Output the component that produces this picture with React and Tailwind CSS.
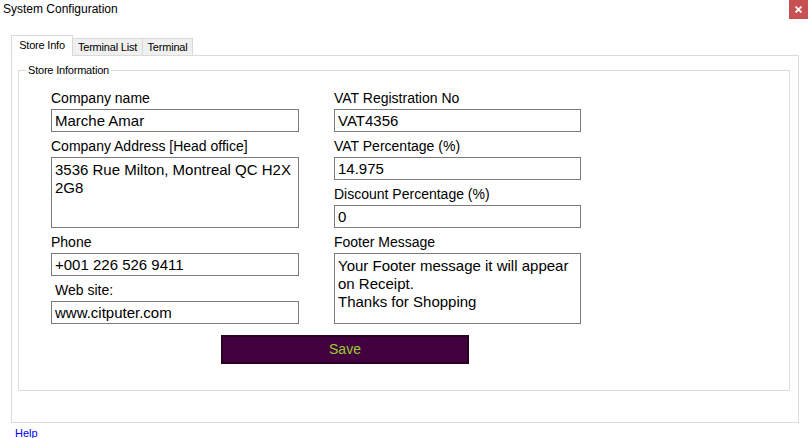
import React from "react";

const Field = ({ label, value, multiline = false, height = "h-[23px]", indent = false }) => (
  <div className="flex flex-col">
    <label className={`mt-[6px] h-[16px] text-[14px] leading-[16px] text-black ${indent ? "pl-[4px]" : ""}`}>
      {label}
    </label>
    {multiline ? (
      <textarea
        readOnly
        defaultValue={value}
        className={`mt-[3px] w-full ${height} resize-none overflow-hidden border border-[#7a7a7a] bg-white px-[3px] pt-[3px] text-[15px] leading-[18px] text-black outline-none`}
      />
    ) : (
      <input
        readOnly
        defaultValue={value}
        className={`mt-[3px] w-full ${height} border border-[#7a7a7a] bg-white px-[3px] text-[15px] leading-[21px] text-black outline-none`}
      />
    )}
  </div>
);

const App = () => {
  return (
    <div className="w-[808px] h-[438px] overflow-hidden bg-white font-['Liberation_Sans',Arial,sans-serif] text-black">
      {/* title bar */}
      <div className="flex h-[19px] items-center justify-between">
        <span className="pl-[3px] text-[12px] leading-[19px]">System Configuration</span>
        <button className="flex h-[19px] w-[19px] items-center justify-center bg-[#c75050]">
          <svg width="7" height="7" viewBox="0 0 7 7">
            <path d="M0.5 0.5 L6.5 6.5 M6.5 0.5 L0.5 6.5" stroke="white" strokeWidth="1.8" />
          </svg>
        </button>
      </div>

      <div className="pl-[11px] pt-[16px]">
        {/* tabs */}
        <div className="flex h-[20px] items-end text-[11px] tracking-[-0.2px]">
          <div className="relative z-10 -mb-[1px] flex h-[21px] w-[62px] justify-center border border-b-0 border-[#d9d9d9] bg-white pt-[3px] leading-[13px]">
            Store Info
          </div>
          <div className="flex h-[17px] w-[70px] justify-center border border-l-0 border-b-0 border-[#d9d9d9] bg-[#f0f0f0] pt-[2px] leading-[13px]">
            Terminal List
          </div>
          <div className="flex h-[17px] w-[50px] justify-center border border-l-0 border-b-0 border-[#d9d9d9] bg-[#f0f0f0] pt-[2px] leading-[13px]">
            Terminal
          </div>
        </div>

        {/* tab page */}
        <div className="h-[368px] w-[788px] border border-[#dadada] pl-[6px] pt-[14px]">
          <div className="relative h-[321px] w-[772px] border border-[#dcdcdc] pl-[32px] pt-[13px]">
            <span className="absolute -top-[7px] left-[7px] bg-white px-[2px] text-[11px] tracking-[-0.2px] leading-[13px]">
              Store Information
            </span>

            <div className="grid w-[530px] grid-cols-[248px_247px] gap-x-[35px]">
              <div className="flex flex-col">
                <Field label="Company name" value="Marche Amar" />
                <Field label="Company Address [Head office]" value="3536 Rue Milton, Montreal QC H2X 2G8" multiline height="h-[71px]" />
                <Field label="Phone" value="+001 226 526 9411" />
                <Field label="Web site:" value="www.citputer.com" indent />
              </div>
              <div className="flex flex-col">
                <Field label="VAT Registration No" value="VAT4356" />
                <Field label="VAT Percentage (%)" value="14.975" />
                <Field label="Discount Percentage (%)" value="0" />
                <Field
                  label="Footer Message"
                  value={"Your Footer message it will appear on Receipt.\nThanks for Shopping"}
                  multiline
                  height="h-[71px]"
                />
              </div>
            </div>

            <button className="ml-[170px] mt-[11px] h-[29px] w-[248px] border-2 border-[#270024] bg-[#42003e] text-[14px] text-[#9acd32]">
              Save
            </button>
          </div>
        </div>
      </div>

      <div className="pl-[15px] pt-[4px] text-[11px] leading-[13px] text-[#0000ff]">Help</div>
    </div>
  );
};

export default App;
